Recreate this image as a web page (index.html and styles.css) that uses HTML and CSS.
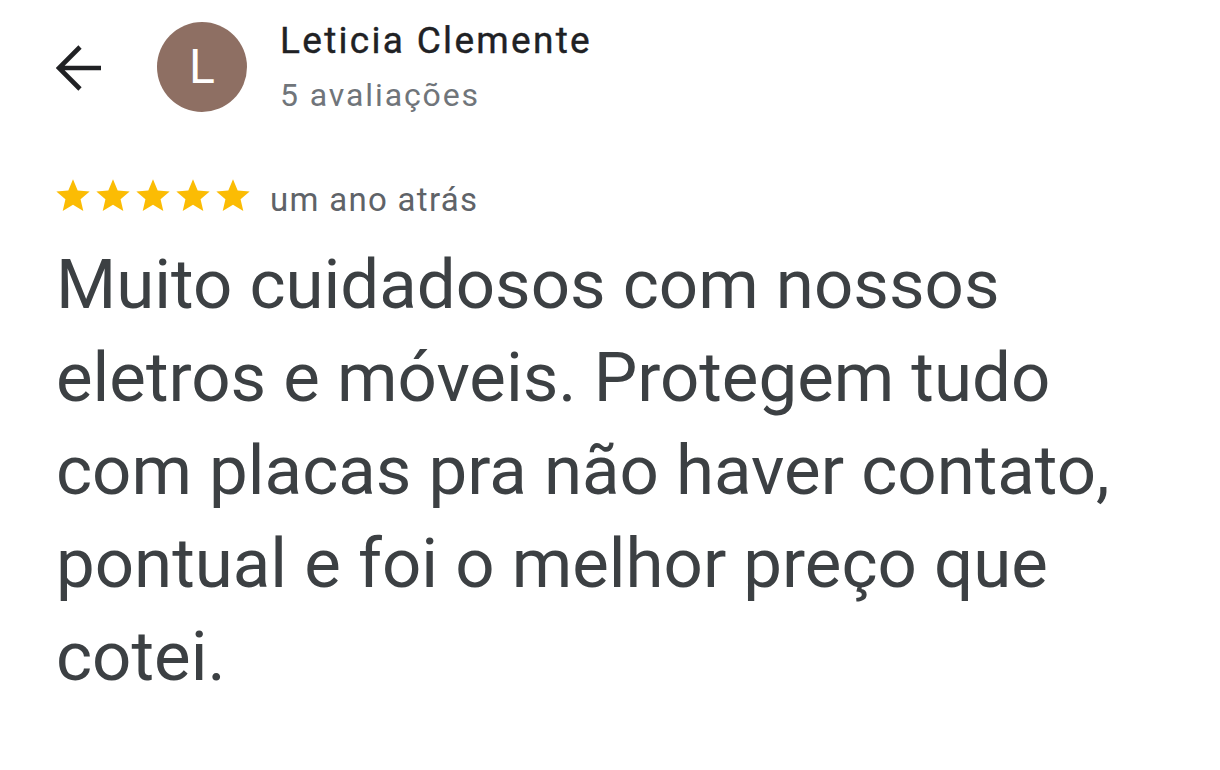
FILE: index.html
```html
<!DOCTYPE html>
<html lang="pt-BR">
<head>
<meta charset="utf-8">
<title>Avaliação</title>
<link rel="stylesheet" href="styles.css">
</head>
<body>
<main class="page">
  <header class="header">
    <svg class="back" width="46" height="46" viewBox="0 0 46 46" aria-hidden="true">
      <path d="M3 23H45M24 2L3 23L24 44" fill="none" stroke="#202124" stroke-width="4.6" stroke-linecap="butt" stroke-linejoin="miter"/>
    </svg>
    <div class="avatar">L</div>
    <div class="who">
      <div class="name">Leticia Clemente</div>
      <div class="count">5 avaliações</div>
    </div>
  </header>
  <div class="meta">
    <div class="stars">
      <svg width="40" height="40" viewBox="0 0 24 24"><path d="M12 17.27L18.18 21l-1.64-7.03L22 9.24l-7.19-.61L12 2 9.19 8.63 2 9.24l5.46 4.73L5.82 21z"/></svg>
      <svg width="40" height="40" viewBox="0 0 24 24"><path d="M12 17.27L18.18 21l-1.64-7.03L22 9.24l-7.19-.61L12 2 9.19 8.63 2 9.24l5.46 4.73L5.82 21z"/></svg>
      <svg width="40" height="40" viewBox="0 0 24 24"><path d="M12 17.27L18.18 21l-1.64-7.03L22 9.24l-7.19-.61L12 2 9.19 8.63 2 9.24l5.46 4.73L5.82 21z"/></svg>
      <svg width="40" height="40" viewBox="0 0 24 24"><path d="M12 17.27L18.18 21l-1.64-7.03L22 9.24l-7.19-.61L12 2 9.19 8.63 2 9.24l5.46 4.73L5.82 21z"/></svg>
      <svg width="40" height="40" viewBox="0 0 24 24"><path d="M12 17.27L18.18 21l-1.64-7.03L22 9.24l-7.19-.61L12 2 9.19 8.63 2 9.24l5.46 4.73L5.82 21z"/></svg>
    </div>
    <span class="when">um ano atrás</span>
  </div>
  <p class="review">Muito cuidadosos com nossos eletros e móveis. Protegem tudo com placas pra não haver contato, pontual e foi o melhor preço que cotei.</p>
</main>
</body>
</html>
```
FILE: styles.css
```css
html, body {
  margin: 0;
  padding: 0;
  background: #ffffff;
}
body {
  font-family: Roboto, "Liberation Sans", sans-serif;
  width: 1220px;
  height: 770px;
  overflow: hidden;
}
.page {
  padding: 17px 0 0 53px;
}
.header {
  display: flex;
  align-items: flex-start;
}
.back {
  display: block;
  margin: 28px 0 0 3px;
  flex: none;
}
.avatar {
  flex: none;
  width: 90px;
  height: 90px;
  margin: 5px 0 0 55px;
  border-radius: 50%;
  background: #8e6f63;
  color: #ffffff;
  font-size: 48px;
  line-height: 90px;
  text-align: center;
}
.who {
  margin-left: 33px;
}
.name {
  font-size: 37px;
  line-height: 48px;
  letter-spacing: 2.3px;
  color: #202124;
  -webkit-text-stroke: 0.4px #202124;
}
.count {
  margin-top: 8px;
  font-size: 32px;
  line-height: 44px;
  letter-spacing: 1.9px;
  color: #70757a;
}
.meta {
  display: flex;
  align-items: center;
  margin-top: 59px;
  height: 40px;
}
.stars {
  display: flex;
  fill: #fbbc04;
}
.stars svg {
  display: block;
}
.when {
  margin-left: 17px;
  margin-top: 6px;
  font-size: 33px;
  letter-spacing: 1.3px;
  color: #5f6368;
}
.review {
  margin: 22px 0 0 3px;
  max-width: 1120px;
  font-size: 69px;
  line-height: 93px;
  color: #3c4043;
}
```
